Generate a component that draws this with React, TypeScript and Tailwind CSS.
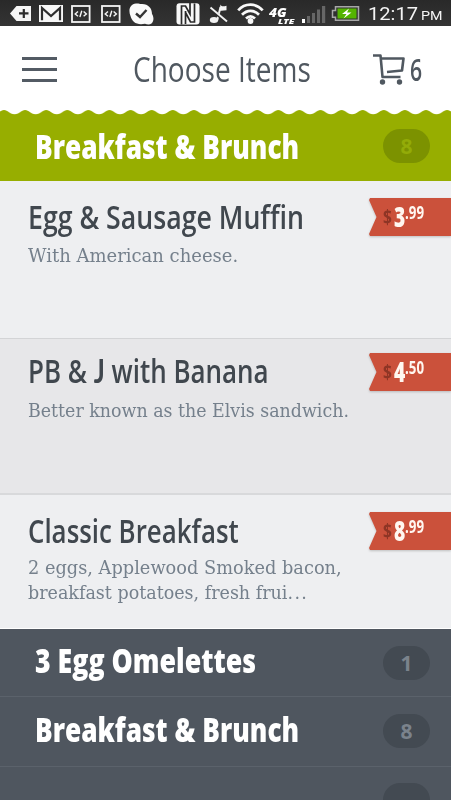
import { type ReactNode, useLayoutEffect, useRef, useState } from 'react';

const SANS = "font-['Open_Sans','Noto_Sans',sans-serif]";
const SLAB = "font-['DejaVu_Serif',serif]";

/** One line of text, condensed horizontally so that it fills `width` pixels. */
function Fit({ width, className = '', children }: { width: number; className?: string; children: ReactNode }) {
  const ref = useRef<HTMLSpanElement>(null);
  const [scale, setScale] = useState(1);
  useLayoutEffect(() => {
    if (ref.current) setScale(width / ref.current.offsetWidth);
  }, [width]);
  return (
    <span className={`block shrink-0 whitespace-nowrap ${className}`} style={{ width }}>
      <span ref={ref} className="inline-block origin-left" style={{ transform: `scaleX(${scale})` }}>
        {children}
      </span>
    </span>
  );
}

function CodeIcon() {
  return (
    <svg width="20" height="18" viewBox="0 0 20 18" fill="none" stroke="#f4f4f4">
      <rect x="1" y="1" width="17.6" height="16" strokeWidth="1.8" />
      <path d="M7 6.5 4.2 9 7 11.3M12.6 6.5 15.4 9l-2.8 2.3M10.8 5.8 8.9 12" strokeWidth="1.4" />
    </svg>
  );
}

function StatusBar() {
  return (
    <div className="flex h-[26px] items-start bg-linear-to-b from-[#292929] to-[#343434] text-white">
      <svg className="mt-[6px] ml-[10px]" width="21" height="15" viewBox="0 0 21 15">
        <path d="M0 7.5 6.5 0H21v15H6.5z" fill="#f6f6f6" />
        <path d="M9 7.4h9.5M13.8 3v9" stroke="#2d2d2d" strokeWidth="2.2" />
      </svg>
      <svg className="mt-[5px] ml-[8px]" width="24" height="17" viewBox="0 0 24 17">
        <path d="M0 0h24v17H0z" fill="#f6f6f6" />
        <path d="M3 15.3V3l9 8 9-8v12.3" fill="none" stroke="#2d2d2d" strokeWidth="2.2" />
        <path d="M3.5 1.2h17L12 8.3z" fill="#f6f6f6" />
      </svg>
      <div className="mt-[5px] ml-[8px]"><CodeIcon /></div>
      <div className="mt-[5px] ml-[10px]"><CodeIcon /></div>
      <svg className="mt-[3px] ml-[8px]" width="25" height="22" viewBox="0 0 25 22">
        <path d="M1.5 13C-1 7 1 1 7 .5c2.5-.2 3.800.3 5 .5 7-.5 11 4 11 10 2 3 2 7-.5 9.500-2 1.500-4.500 1-6.500.2C8 22.500 3 19 1.500 13z" fill="#fafafa" />
        <path d="m7 10.500 4 3.500 6.500-7" fill="none" stroke="#343434" strokeWidth="2.4" />
      </svg>
      <svg className="mt-[3px] ml-[22px]" width="24" height="22" viewBox="0 0 24 22">
        <rect x=".5" y=".3" width="23" height="21.2" rx="3" fill="#f8f8f8" />
        <path d="M5.500 21.500V3h4l4.500 8V0M9.500 8v13M14 0h0M18.500.5V19h-4L9.500 9.500" fill="none" stroke="#292929" strokeWidth="1.7" />
      </svg>
      <svg className="mt-[3px] ml-[9px]" width="20" height="21" viewBox="0 0 20 21" fill="none" stroke="#f2f2f2">
        <ellipse cx="5" cy="17" rx="4.2" ry="3" fill="#f2f2f2" stroke="none" />
        <path d="M8.300 17 11.500 4" strokeWidth="2" />
        <path d="M11.500 1.500c1.500 3 3.500 1.500 6 1.200v4.500c-2.500 0-4.500 1-7 .2z" fill="#f2f2f2" stroke="none" />
        <path d="m1.500 6 16.500 13" stroke="#2d2d2d" strokeWidth="3.5" />
        <path d="m1.500 4.500 16.500 14" strokeWidth="1.9" />
      </svg>
      <svg className="mt-[3px] ml-[8px]" width="27" height="22" viewBox="0 0 27 22" fill="none" stroke="#f8f8f8" strokeWidth="2.7">
        <path d="M1.200 7.300c6.500-7.500 18-7.500 24.500 0M5 11.800c5-5.300 12-5.300 17 0M9 15.500c3-2.800 6-2.800 9 0" />
        <circle cx="13.500" cy="18" r="2.900" fill="#f8f8f8" stroke="none" />
      </svg>
      <div className="ml-[5px] w-[26px] pt-[7px] font-['Open_Sans',sans-serif] font-extrabold italic">
        <Fit width={18} className="text-[13px] leading-[10px]">4G</Fit>
        <div className="pl-[9px]"><Fit width={16} className="text-[7.5px] leading-[9px]">LTE</Fit></div>
      </div>
      <svg className="mt-[5px] ml-[7px]" width="25" height="18" viewBox="0 0 25 18">
        <path d="M0 14h3v4H0z" fill="#fff" />
        <path d="M5 11h3v7H5zM10 8h3v10h-3zM15 4.500h3V18h-3zM20 1h3.200v17H20z" fill="#666" />
      </svg>
      <svg className="mt-[5px] ml-[4px]" width="29" height="17" viewBox="0 0 29 17">
        <path d="M4.500 1.700h23v13.600h-23v-3H1.500V5.500h3z" fill="#303030" stroke="#a7a7a7" strokeWidth="1.5" />
        <path d="M6.500 3.500h19v10h-19z" fill="#54b400" />
        <path d="m18 3.500-7 5.500h4.500l-3 4.500 8-6h-4.500z" fill="#fff" />
      </svg>
      <div className="ml-[8px] flex font-[Roboto,sans-serif] text-[#f4f4f4]">
        <Fit width={50} className="text-[18.5px] leading-[29px]">12:17</Fit>
        <div className="ml-[3px]"><Fit width={22} className="text-[13px] leading-[32px]">PM</Fit></div>
      </div>
    </div>
  );
}

function Badge({ tone, children }: { tone: 'green' | 'dark'; children: string }) {
  const color = tone === 'green' ? 'bg-[#7c9200] text-[#93ab08]' : 'bg-[#434a52] text-[#7b838c]';
  return (
    <div className={`flex h-[34px] w-[47px] justify-center rounded-full ${color}`}>
      <Fit width={12} className={`${SANS} text-[21px] leading-[35px] font-bold`}>{children}</Fit>
    </div>
  );
}

function PriceTag({ dollars, cents }: { dollars: string; cents: string }) {
  return (
    <div className="w-[82px] shrink-0 drop-shadow-[0_1.5px_1px_rgba(0,0,0,0.2)]">
      <div className={`flex h-[38px] bg-[#cb513b] pl-[14px] ${SANS} [clip-path:polygon(1px_0,100%_0,100%_100%,1px_100%,0_36px,7.5px_50%,0_2px)]`}>
        <Fit width={9} className="text-[19px] leading-[39px] font-bold text-[#8e3525]">$</Fit>
        <div className="ml-[2px] flex text-[#fff7f0]">
          <Fit width={11} className="text-[28px] leading-[37px] font-extrabold">{dollars}</Fit>
          <Fit width={19} className="text-[17.5px] leading-[28px] font-bold">{cents}</Fit>
        </div>
      </div>
    </div>
  );
}

const TITLE = `${SANS} text-[32.5px] leading-[42px] font-semibold text-[#40474e]`;
const NOTE = `${SLAB} text-[18.5px] leading-[25px] text-[#75808c]`;
const HEADING = `${SANS} text-[33px] leading-[43px] font-extrabold text-white`;

export default function App() {
  return (
    <div className="h-[800px] w-[451px] overflow-hidden bg-white">
      <StatusBar />
      <header className="flex h-[84px] items-start">
        <div className="mt-[31px] ml-[22px] flex w-[35px] flex-col gap-[8px]">
          <div className="h-[3px] bg-[#535b64]" />
          <div className="h-[2.5px] bg-[#535b64]" />
          <div className="h-[3px] bg-[#535b64]" />
        </div>
        <div className="mt-[22px] ml-[76px]">
          <Fit width={178} className={`${SANS} text-[34px] leading-[43px] text-[#505860]`}>Choose Items</Fit>
        </div>
        <svg className="mt-[27px] ml-[62px]" width="33" height="32" viewBox="0 0 33 32" fill="none" stroke="#505860" strokeWidth="2.6">
          <path d="M0 2.500h7.500l2 21.500h18M8 5.500h22.500L29 17.500 14 19" strokeLinejoin="round" />
          <circle cx="9.500" cy="29" r="2.700" fill="#505860" stroke="none" />
          <circle cx="26.500" cy="29" r="2.700" fill="#505860" stroke="none" />
        </svg>
        <div className="mt-[22px] ml-[4px]">
          <Fit width={12} className={`${SANS} text-[30px] leading-[44px] font-semibold text-[#505860]`}>6</Fit>
        </div>
      </header>

      <section className="h-[71px] bg-[#97ae00]">
        <svg className="block" width="451" height="5" viewBox="0 0 451 5">
          <defs>
            <pattern id="scallop" x="4" width="21.1" height="5" patternUnits="userSpaceOnUse">
              <path d="M0 0C4 0 5 4.200 10.550 4.200S17.100 0 21.100 0z" fill="#fff" />
            </pattern>
          </defs>
          <rect width="451" height="5" fill="url(#scallop)" />
        </svg>
        <div className="flex items-start pl-[35px]">
          <div className="mt-[10px]"><Fit width={264} className={HEADING}>Breakfast &amp; Brunch</Fit></div>
          <div className="mt-[14px] ml-[84px]"><Badge tone="green">8</Badge></div>
        </div>
      </section>

      <article className="flex h-[158px] justify-between border-b border-[#d3d4d6] bg-[#eeeff1] pl-[28px]">
        <div className="pt-[15px]">
          <Fit width={276} className={TITLE}>Egg &amp; Sausage Muffin</Fit>
          <div className="mt-[5px]"><Fit width={210} className={NOTE}>With American cheese.</Fit></div>
        </div>
        <div className="pt-[17px]"><PriceTag dollars="3" cents=".99" /></div>
      </article>
      <article className="flex h-[156px] justify-between border-b-2 border-[#d8d9db] bg-[#e7e7e9] pl-[28px]">
        <div className="pt-[11px]">
          <Fit width={241} className={TITLE}>PB &amp; <span className="font-[Lato] font-bold">J</span> with Banana</Fit>
          <div className="mt-[6px]"><Fit width={321} className={NOTE}>Better known as the Elvis sandwich.</Fit></div>
        </div>
        <div className="pt-[14px]"><PriceTag dollars="4" cents=".50" /></div>
      </article>
      <article className="flex h-[134px] justify-between border-b border-white bg-[#eeeff1] pl-[28px]">
        <div className="pt-[15px]">
          <Fit width={211} className={TITLE}>Classic Breakfast</Fit>
          <div className="mt-[3px]">
            <Fit width={314} className={NOTE}>2 eggs, Applewood Smoked bacon,</Fit>
            <Fit width={280} className={NOTE}>breakfast potatoes, fresh frui<span className="tracking-[1.5px]">...</span></Fit>
          </div>
        </div>
        <div className="pt-[17px]"><PriceTag dollars="8" cents=".99" /></div>
      </article>

      <section className="h-[171px] bg-[#4f565f]">
        <div className="flex h-[68px] items-start border-b border-[#5b626b] pl-[35px]">
          <div className="mt-[10px]"><Fit width={221} className={HEADING}>3 Egg Omelettes</Fit></div>
          <div className="mt-[17px] ml-[127px]"><Badge tone="dark">1</Badge></div>
        </div>
        <div className="flex h-[70px] items-start border-b border-[#5b626b] pl-[35px]">
          <div className="mt-[11px]"><Fit width={264} className={HEADING}>Breakfast &amp; Brunch</Fit></div>
          <div className="mt-[17px] ml-[84px]"><Badge tone="dark">8</Badge></div>
        </div>
        <div className="mt-[16px] ml-[383px] h-[34px] w-[47px] rounded-full bg-[#434a52]" />
      </section>
    </div>
  );
}
